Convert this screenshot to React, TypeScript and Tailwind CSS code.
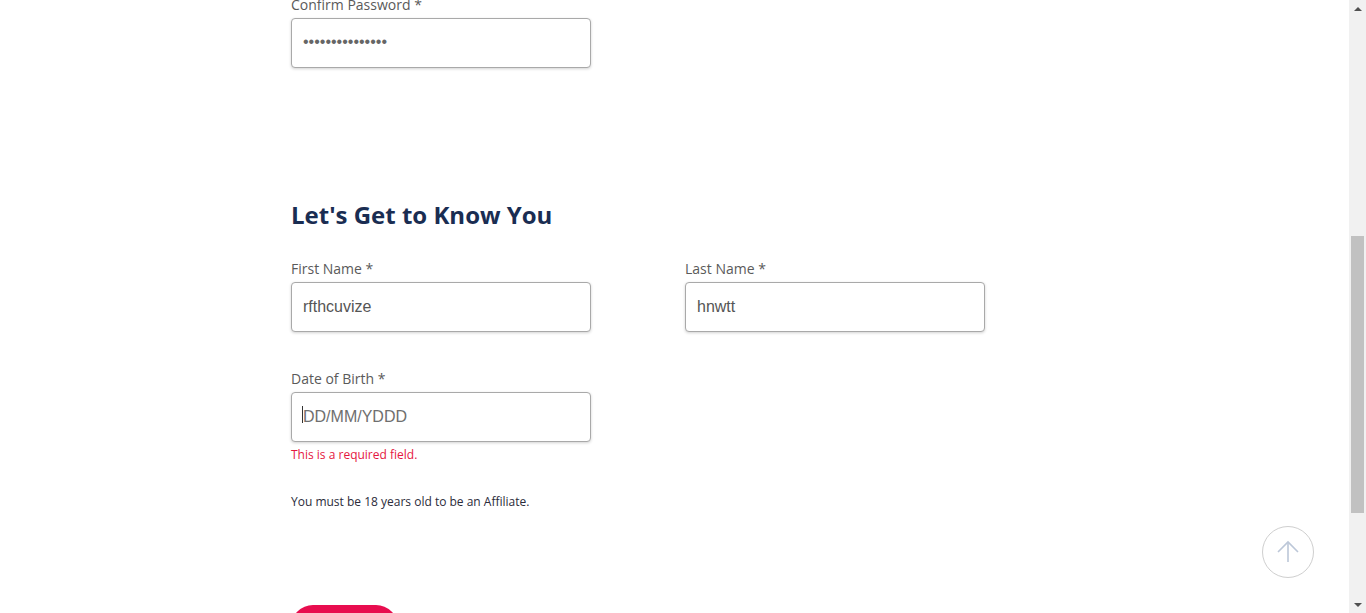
import React from "react";

const label = "pt-px text-[14px] leading-5 text-[#5a5a5a] font-['Open_Sans',sans-serif]";
const box =
  "w-[300px] h-[50px] rounded-[4px] border border-[#a9a9a9] bg-white shadow-[0_1px_3px_rgba(0,0,0,0.18)] px-[11px] flex items-center text-[16px] text-[#555] font-['Liberation_Sans',Arial,sans-serif]";

function Field({ name, value, children }: { name: string; value?: string; children?: React.ReactNode }) {
  return (
    <div className="flex flex-col gap-[3px]">
      <span className={label}>{name} *</span>
      <div className={box}>{children ?? value}</div>
    </div>
  );
}

export default function App() {
  return (
    <div className="flex h-[613px] w-[1366px] overflow-hidden bg-white">
      <main className="relative flex-1">
        <div className="-mt-[6px] pl-[291px] flex flex-col">
          <Field name="Confirm Password">
            <span className="text-[16px] text-[#666] pb-[2px]">•••••••••••••••</span>
          </Field>

          <h2 className="mt-[131px] text-[24px] leading-8 font-bold text-[#1a2d52] font-['Open_Sans',sans-serif]">
            Let's Get to Know You
          </h2>

          <div className="mt-[27px] flex gap-[94px]">
            <Field name="First Name" value="rfthcuvize" />
            <Field name="Last Name" value="hnwtt" />
          </div>

          <div className="mt-[36px]">
            <Field name="Date of Birth">
              <span className="relative text-[#6f6f6f]">
                <span className="absolute -left-[1px] top-[1px] h-[17px] w-px bg-[#333]" />
                DD/MM/YDDD
              </span>
            </Field>
            <p className="mt-[5px] text-[12px] leading-4 text-[#e5173f] font-['Open_Sans',sans-serif]">
              This is a required field.
            </p>
          </div>

          <p className="mt-[31px] text-[12px] leading-4 text-[#2b2b3a] font-['Open_Sans',sans-serif]">
            You must be 18 years old to be an Affiliate.
          </p>

          <button className="mt-[95px] h-[44px] w-[107px] rounded-full bg-[#e80d4f]" />
        </div>

        <button className="absolute left-[1262px] top-[526px] flex h-[52px] w-[52px] items-center justify-center rounded-full border border-[#cfcfcf] bg-white">
          <svg width="24" height="24" viewBox="0 0 24 24" fill="none" stroke="#bcc7d8" strokeWidth="1.6">
            <path d="M12 2v20" />
            <path d="M2 12L12 2l10 10" />
          </svg>
        </button>
      </main>

      <div className="flex w-[17px] flex-col items-center bg-[#f1f1f1]">
        <div className="flex h-[17px] items-center justify-center">
          <div className="h-0 w-0 border-x-[4px] border-b-[4px] border-x-transparent border-b-[#505050]" />
        </div>
        <div className="mt-[219px] h-[277px] w-[13px] bg-[#c1c1c1]" />
        <div className="flex-1" />
        <div className="flex h-[17px] items-center justify-center">
          <div className="h-0 w-0 border-x-[4px] border-t-[4px] border-x-transparent border-t-[#505050]" />
        </div>
      </div>
    </div>
  );
}
